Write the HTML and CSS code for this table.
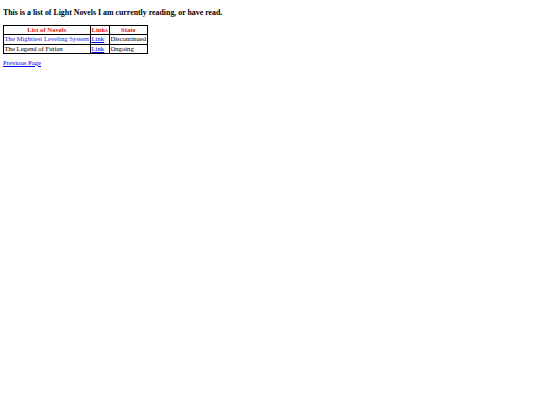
FILE: index.html
```html
<!DOCTYPE html>
<html>
<head>
<meta charset="utf-8">
<link rel="stylesheet" href="styles.css">
</head>
<body>
<h3 class="title">This is a list of Light Novels I am currently reading, or have read.</h3>
<table class="novels">
<tr><th>List of Novels</th><th>Links</th><th>State</th></tr>
<tr><td class="blue">The Mightiest Leveling System</td><td><a href="#">Link</a></td><td>Discontinued</td></tr>
<tr><td>The Legend of Futian</td><td><a href="#">Link</a></td><td>Ongoing</td></tr>
</table>
<p class="back"><a href="#">Previous Page</a></p>
</body>
</html>
```
FILE: styles.css
```css
body {
  margin: 3px;
  font-family: "Liberation Serif", serif;
  font-size: 6.7px;
  color: #000;
  background: #fff;
}
.title {
  font-size: 7.86px;
  font-weight: bold;
  line-height: 9px;
  margin: 5px 0 8px;
}
.novels {
  border-collapse: collapse;
  border: 1px solid #000;
}
.novels th, .novels td {
  border: 1px solid #000;
  padding: 0 1px 0 0.5px;
  line-height: 8.3px;
  height: 8.3px;
  white-space: nowrap;
}
.novels th {
  color: #e01010;
  font-weight: bold;
}
.novels td.blue { color: #2222dd; }
a { color: #0000ee; }
.back { margin: 5px 0; line-height: 8px; }
```
